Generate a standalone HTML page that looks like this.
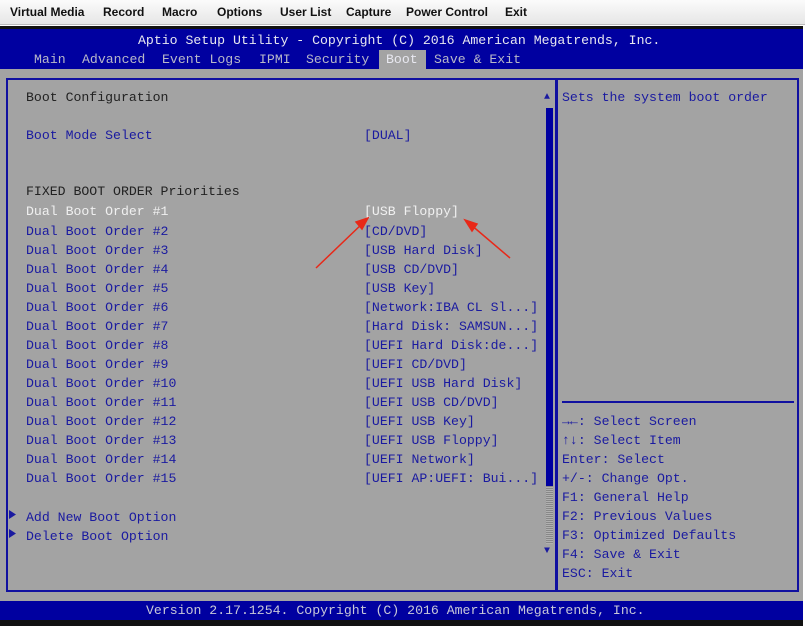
<!DOCTYPE html>
<html><head><meta charset="utf-8"><style>
*{margin:0;padding:0;box-sizing:border-box}
body{width:805px;height:629px;background:#fff;position:relative;overflow:hidden;font-family:"Liberation Mono",monospace;font-size:13.2px}
.a{position:absolute;white-space:pre;line-height:16px}
#menu{position:absolute;left:0;top:0;width:805px;height:25px;background:linear-gradient(#fbfbfb,#e6e6e6);border-bottom:1px solid #bbb;font-family:"Liberation Sans",sans-serif;font-weight:bold;font-size:12px;color:#111}
#menu span{position:absolute;top:5px}
#top{position:absolute;left:0;top:26px;width:803px;height:43px;background:#0000a0;border-top:3px solid #111}
#gray{position:absolute;left:0;top:69px;width:803px;height:532px;background:#a3a3a3}
#lp{position:absolute;left:6px;top:78px;width:551px;height:514px;border:2px solid #1010a0}
#rp{position:absolute;left:556px;top:78px;width:243px;height:514px;border:2px solid #1010a0}
#bot{position:absolute;left:0;top:601px;width:803px;height:19px;background:#0000a0}
#blk{position:absolute;left:0;top:620px;width:803px;height:6px;background:#111}
.b{color:#1a1aa0}.w{color:#f0f0f0}.d{color:#222}.h{color:#b8b8c8}
</style></head><body>
<div id="menu"><span style="left:10px">Virtual Media</span><span style="left:103px">Record</span><span style="left:162px">Macro</span><span style="left:217px">Options</span><span style="left:280px">User List</span><span style="left:346px">Capture</span><span style="left:406px">Power Control</span><span style="left:505px">Exit</span></div>
<div id="top"></div>
<div class="a" style="left:138px;top:33px;color:#e8e8f0">Aptio Setup Utility - Copyright (C) 2016 American Megatrends, Inc.</div>
<div style="position:absolute;left:379px;top:50px;width:47px;height:19px;background:#a3a3a3"></div>
<div class="a h" style="left:34px;top:52px">Main</div>
<div class="a h" style="left:82px;top:52px">Advanced</div>
<div class="a h" style="left:162px;top:52px">Event Logs</div>
<div class="a h" style="left:259px;top:52px">IPMI</div>
<div class="a h" style="left:306px;top:52px">Security</div>
<div class="a" style="left:386px;top:52px;color:#e8e8f0">Boot</div>
<div class="a h" style="left:434px;top:52px">Save &amp; Exit</div>
<div id="gray"></div>
<div id="lp"></div><div id="rp"></div>
<div style="position:absolute;left:562px;top:401px;width:232px;height:2px;background:#1010a0"></div>
<div style="position:absolute;left:546px;top:108px;width:7px;height:378px;background:#0000a0"></div>
<div style="position:absolute;left:546px;top:486px;width:7px;height:58px;background:repeating-linear-gradient(#888 0 1px,#b0b0b0 1px 2px)"></div>
<div class="a b" style="left:544px;top:90px;font-size:10px">▲</div>
<div class="a b" style="left:544px;top:544px;font-size:10px">▼</div>
<div class="a d" style="left:26px;top:90px">Boot Configuration</div>
<div class="a b" style="left:26px;top:128px">Boot Mode Select</div>
<div class="a b" style="left:364px;top:128px">[DUAL]</div>
<div class="a d" style="left:26px;top:184px">FIXED BOOT ORDER Priorities</div>
<div class="a w" style="left:26px;top:204px">Dual Boot Order #1</div>
<div class="a w" style="left:364px;top:204px">[USB Floppy]</div>
<div class="a b" style="left:26px;top:222px;line-height:19px">Dual Boot Order #2
Dual Boot Order #3
Dual Boot Order #4
Dual Boot Order #5
Dual Boot Order #6
Dual Boot Order #7
Dual Boot Order #8
Dual Boot Order #9
Dual Boot Order #10
Dual Boot Order #11
Dual Boot Order #12
Dual Boot Order #13
Dual Boot Order #14
Dual Boot Order #15</div>
<div class="a b" style="left:364px;top:222px;line-height:19px">[CD/DVD]
[USB Hard Disk]
[USB CD/DVD]
[USB Key]
[Network:IBA CL Sl...]
[Hard Disk: SAMSUN...]
[UEFI Hard Disk:de...]
[UEFI CD/DVD]
[UEFI USB Hard Disk]
[UEFI USB CD/DVD]
[UEFI USB Key]
[UEFI USB Floppy]
[UEFI Network]
[UEFI AP:UEFI: Bui...]</div>
<svg style="position:absolute;left:9px;top:510px" width="8" height="30"><polygon points="0,0 7,4.5 0,9" fill="#1a1aa0"/><polygon points="0,19 7,23.5 0,28" fill="#1a1aa0"/></svg>
<div class="a b" style="left:26px;top:508px;line-height:19px">Add New Boot Option
Delete Boot Option</div>
<div class="a b" style="left:562px;top:90px">Sets the system boot order</div>
<div class="a b" style="left:562px;top:412px;line-height:19px">→←: Select Screen
↑↓: Select Item
Enter: Select
+/-: Change Opt.
F1: General Help
F2: Previous Values
F3: Optimized Defaults
F4: Save &amp; Exit
ESC: Exit</div>
<div id="bot"></div><div id="blk"></div>
<div class="a" style="left:146px;top:603px;color:#c8c8d8">Version 2.17.1254. Copyright (C) 2016 American Megatrends, Inc.</div>
<svg style="position:absolute;left:0;top:0" width="805" height="629">
<g stroke="#e82818" stroke-width="1.5" fill="#e82818">
<line x1="316" y1="268" x2="364" y2="222"/><polygon points="368,218 356,222 362,229"/>
<line x1="510" y1="258" x2="470" y2="224"/><polygon points="465,220 472,231 477,224"/>
</g></svg>
</body></html>
